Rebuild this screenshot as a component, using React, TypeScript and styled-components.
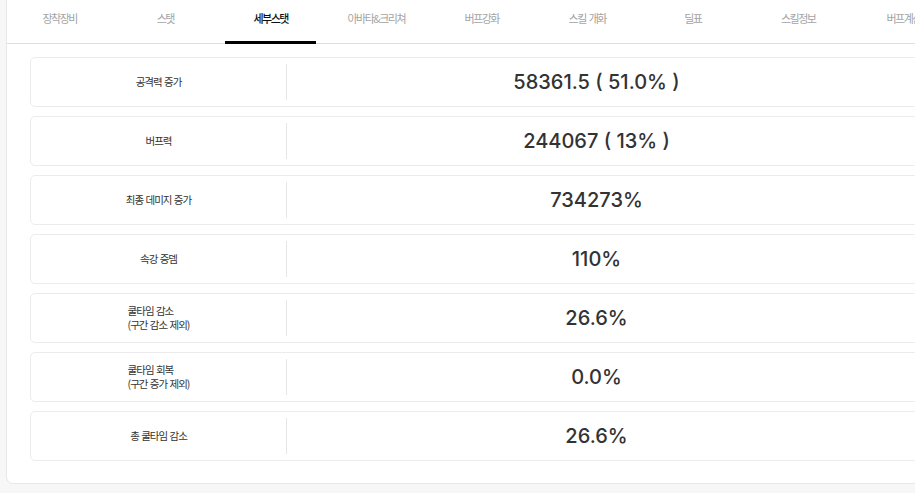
import React from "react";
import styled, { createGlobalStyle } from "styled-components";

const Global = createGlobalStyle`
  html, body {
    margin: 0;
    padding: 0;
    background: #f7f7f7;
    overflow: hidden;
  }
  body {
    font-family: "Noto Sans CJK KR", "Noto Sans", sans-serif;
    width: 915px;
  }
`;

const Panel = styled.div`
  width: 960px;
  margin-left: 6px;
  background: #fff;
  border: 1px solid #e8e8e8;
  border-top: none;
  border-radius: 0 0 7px 7px;
  padding-bottom: 22px;
  box-sizing: border-box;
`;

const Tabs = styled.nav`
  display: flex;
  height: 43px;
  border-bottom: 1px solid #dedede;
`;

const Tab = styled.div<{ $active?: boolean }>`
  position: relative;
  flex: 0 0 105.5px;
  box-sizing: border-box;
  padding-top: 10px;
  text-align: center;
  font-size: 11px;
  letter-spacing: -1.5px;
  word-spacing: 2px;
  line-height: 16px;
  white-space: nowrap;
  color: ${(p) => (p.$active ? "#111" : "#a3a3a3")};
  font-weight: ${(p) => (p.$active ? 500 : 400)};
  &::after {
    content: "";
    display: ${(p) => (p.$active ? "block" : "none")};
    position: absolute;
    left: 7px;
    right: 8px;
    bottom: -1px;
    height: 3px;
    background: #000;
  }
`;

const List = styled.div`
  display: flex;
  flex-direction: column;
  gap: 9px;
  padding: 13px 0 0 23px;
`;

const Card = styled.div`
  display: flex;
  align-items: center;
  height: 50px;
  box-sizing: border-box;
  background: #fff;
  border: 1px solid #ececec;
  border-radius: 5px;
`;

const LabelCell = styled.div`
  flex: 0 0 255px;
  display: flex;
  justify-content: center;
  align-items: center;
`;

const LabelText = styled.div`
  font-size: 10.5px;
  line-height: 14px;
  letter-spacing: -1px;
  word-spacing: 1px;
  color: #333;
  text-align: left;
  white-space: nowrap;
`;

const Divider = styled.div`
  flex: 0 0 1px;
  align-self: stretch;
  margin: 6px 0;
  background: #e6e6e6;
`;

const ValueCell = styled.div`
  flex: 1;
  padding-right: 58px;
  text-align: center;
  font-family: Inter, Roboto, "Noto Sans", sans-serif;
  font-weight: 500;
  font-size: 20px;
  color: #333;
  white-space: nowrap;
`;

const tabs = [
  "장착장비",
  "스탯",
  "세부스탯",
  "아바타&크리쳐",
  "버프강화",
  "스킬 개화",
  "딜표",
  "스킬정보",
  "버프계산",
];

const rows: { label: string[]; value: string }[] = [
  { label: ["공격력 증가"], value: "58361.5 ( 51.0% )" },
  { label: ["버프력"], value: "244067 ( 13% )" },
  { label: ["최종 데미지 증가"], value: "734273%" },
  { label: ["속강 증뎀"], value: "110%" },
  { label: ["쿨타임 감소", "(구간 감소 제외)"], value: "26.6%" },
  { label: ["쿨타임 회복", "(구간 증가 제외)"], value: "0.0%" },
  { label: ["총 쿨타임 감소"], value: "26.6%" },
];

export default function App() {
  return (
    <>
      <Global />
      <Panel>
        <Tabs>
          {tabs.map((t) => (
            <Tab key={t} $active={t === "세부스탯"}>
              {t}
            </Tab>
          ))}
        </Tabs>
        <List>
          {rows.map((r) => (
            <Card key={r.label.join()}>
              <LabelCell>
                <LabelText>
                  {r.label.map((l, i) => (
                    <div key={i}>{l}</div>
                  ))}
                </LabelText>
              </LabelCell>
              <Divider />
              <ValueCell>{r.value}</ValueCell>
            </Card>
          ))}
        </List>
      </Panel>
    </>
  );
}
